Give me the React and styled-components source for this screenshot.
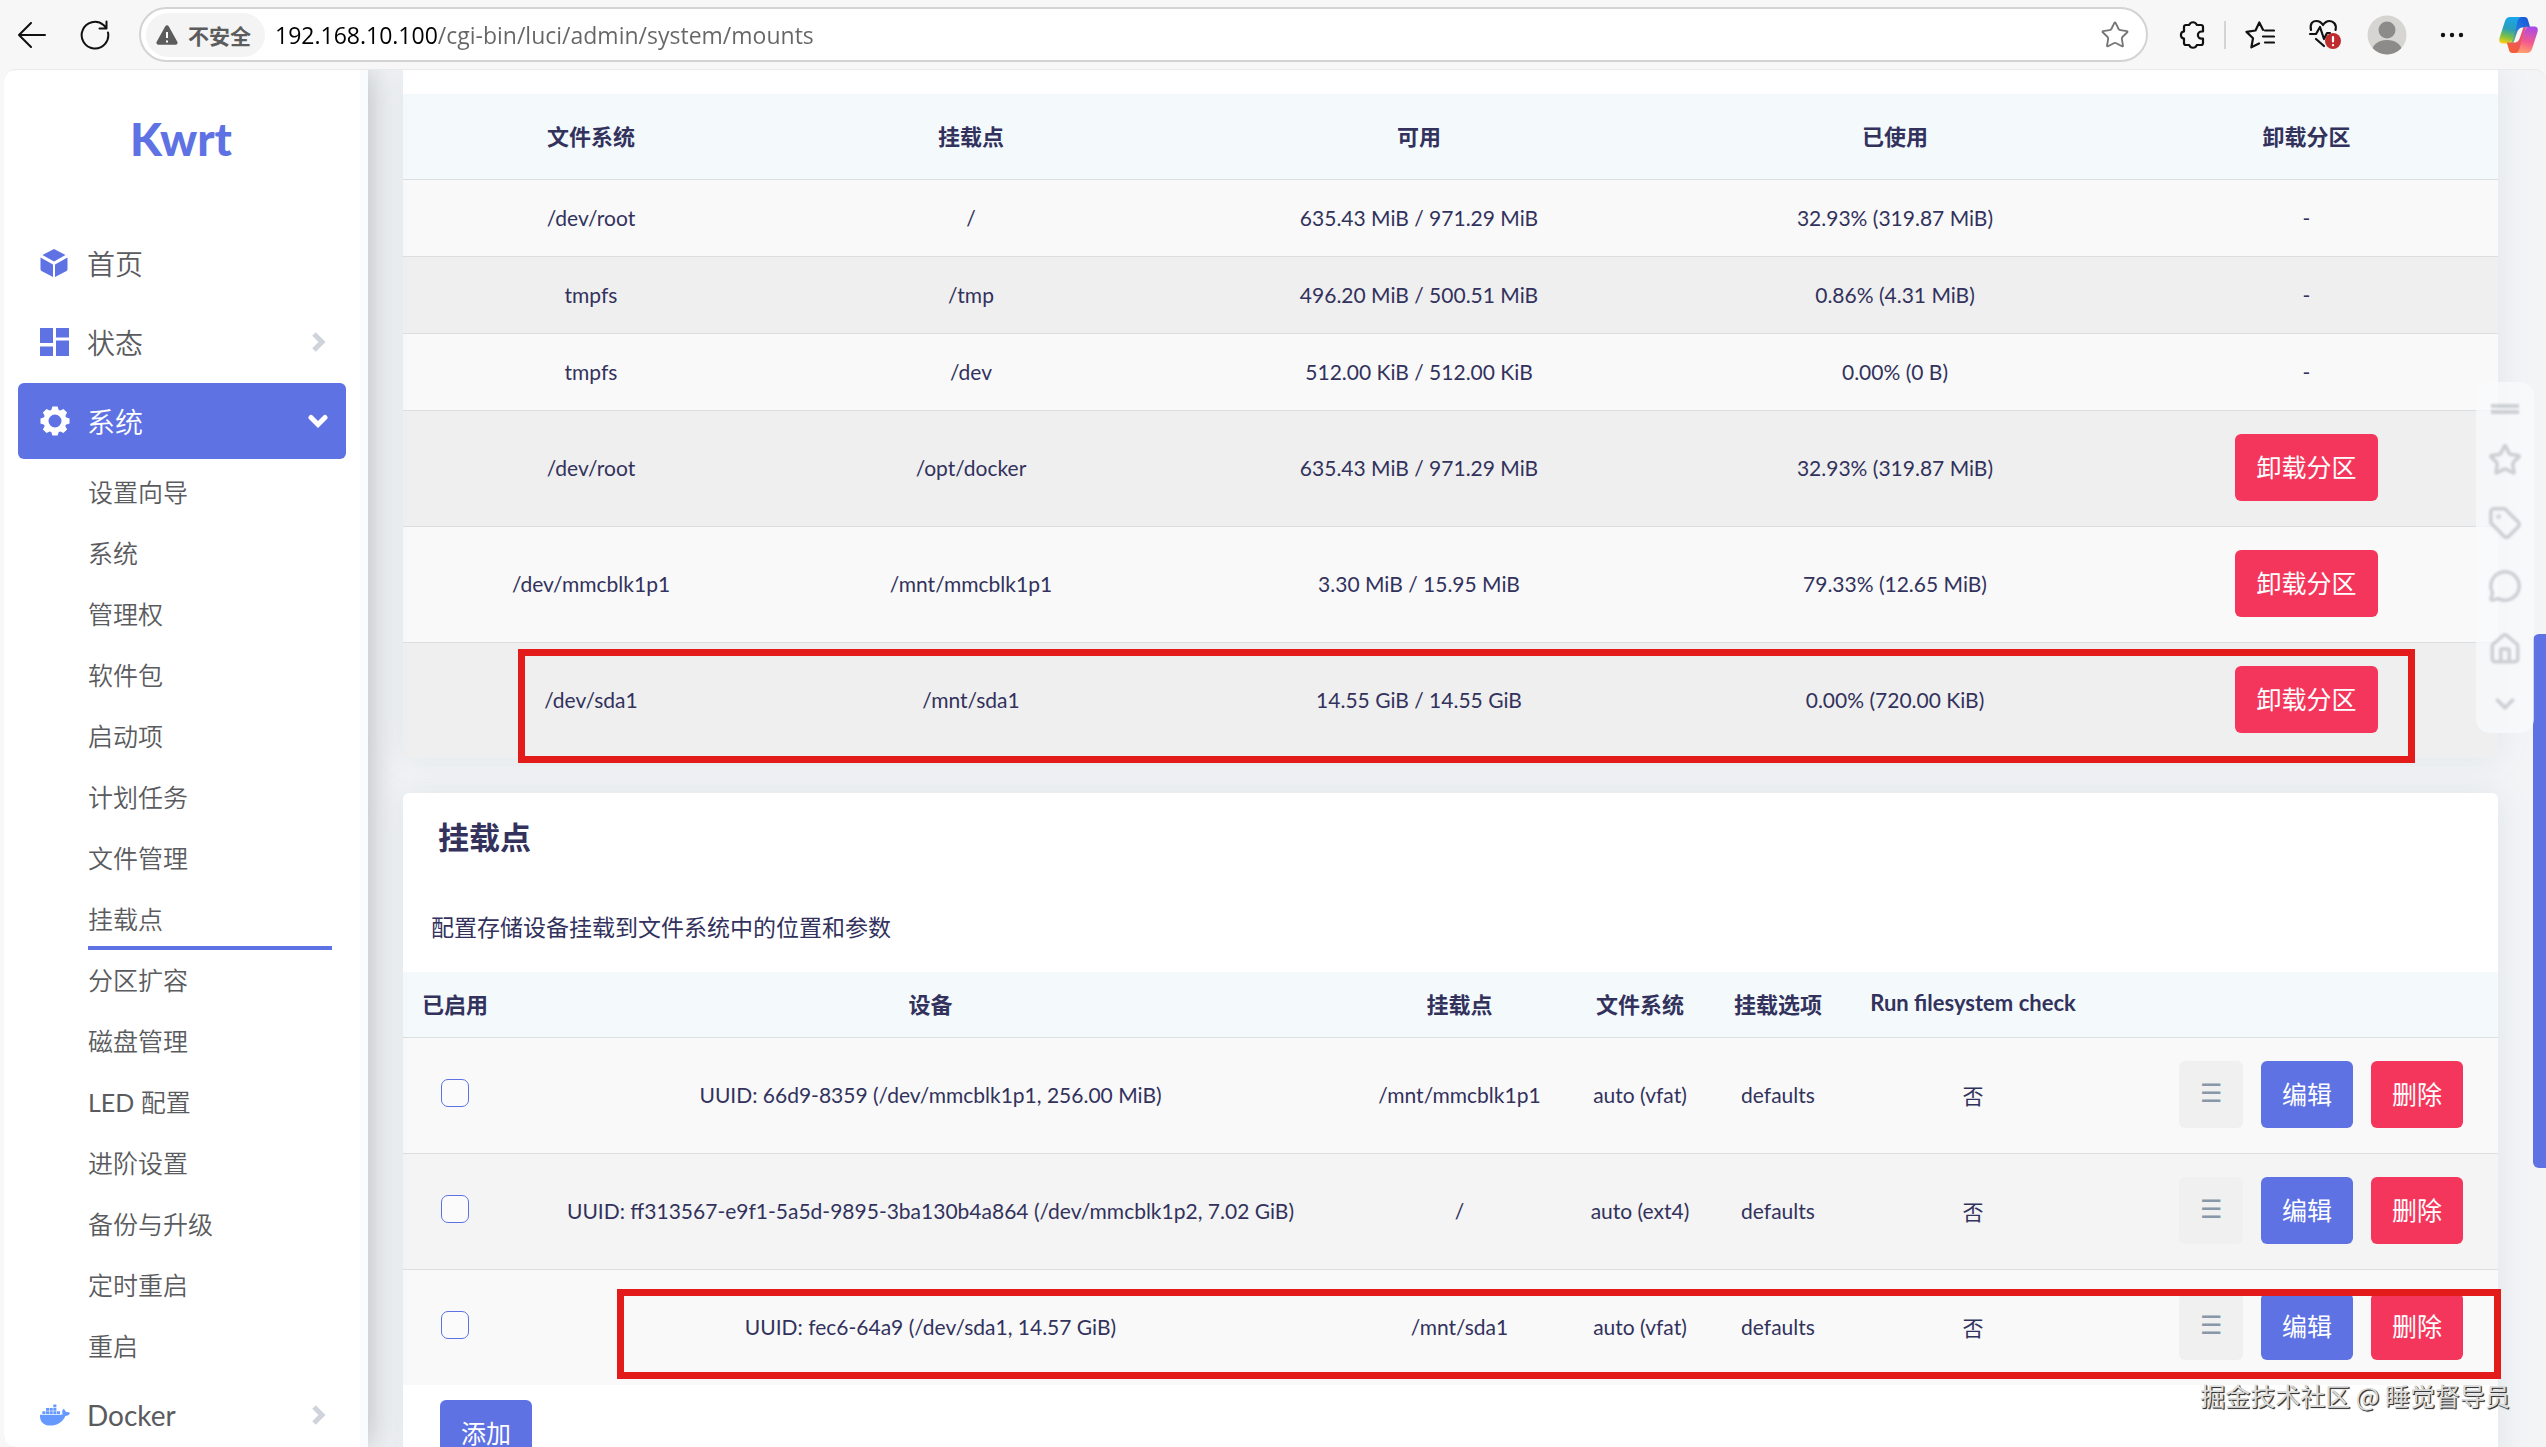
import React, { useState } from 'react';
import styled, { createGlobalStyle, css } from 'styled-components';
import { Star, Tag, MessageCircle, House, ChevronDown } from 'lucide-react';
import { FaDocker } from 'react-icons/fa';

const BLUE = '#5e72e4';
const RED = '#f5365c';
const INK = '#32325d';
const CJK = "'Noto Sans CJK SC', sans-serif";

const GlobalStyle = createGlobalStyle`
  * {
    box-sizing: border-box;
  }
  body {
    margin: 0;
    overflow: hidden;
    background: #f7f7f7;
    color: ${INK};
    font-family: 'Lato', ${CJK};
    font-size: 21px;
  }
  button,
  input {
    font-family: inherit;
  }
`;

const Window = styled.div`
  display: flex;
  flex-direction: column;
  height: 100vh;
`;

/* browser bar */

const BrowserBar = styled.header`
  display: flex;
  align-items: center;
  flex: 0 0 69px;
  padding-left: 13px;
  background: #f7f7f7;
`;

const IconButton = styled.button`
  display: flex;
  align-items: center;
  justify-content: center;
  flex: none;
  width: ${(p) => p.$width}px;
  height: 40px;
  padding: 0;
  border: 0;
  background: none;
  color: #111;
`;

const AddressBar = styled.div`
  display: flex;
  align-items: center;
  flex: 1;
  height: 55px;
  margin-right: 16px;
  padding: 0 16px 0 5px;
  border: 2px solid #d2d4d3;
  border-radius: 28px;
  background: #fff;
`;

const Security = styled.div`
  display: flex;
  align-items: center;
  gap: 10px;
  height: 44px;
  padding: 0 14px 0 10px;
  border-radius: 22px;
  background: #f4f4f4;
  color: #5c5c5c;
  font: bold 21px ${CJK};
`;

const Url = styled.input`
  flex: 1;
  margin-left: 10px;
  padding: 0;
  border: 0;
  outline: 0;
  color: #666;
  background: linear-gradient(90deg, #000 163px, #666 163px);
  background-clip: text;
  -webkit-text-fill-color: transparent;
  font-family: 'Open Sans', sans-serif;
  font-size: 23px;
`;

const Separator = styled.span`
  width: 2px;
  height: 28px;
  margin: 0 4px;
  background: #d4d4d4;
`;

const ArrowIcon = () => (
  <svg width="30" height="26" fill="none" stroke="currentColor" strokeWidth="2" strokeLinecap="round" strokeLinejoin="round">
    <path d="M28 13H2M14 1 2 13l12 12" />
  </svg>
);

const ReloadIcon = () => (
  <svg width="30" height="30" fill="none" stroke="currentColor" strokeWidth="2" strokeLinecap="round" strokeLinejoin="round">
    <path d="M28 12.500A13.300 13.300 0 1 1 23.500 5L26.500 8M26.500 1.500V8.500H19.500" />
  </svg>
);

const WarningIcon = () => (
  <svg width="22" height="20">
    <path d="M9.300 1.200a2 2 0 0 1 3.400 0l8.600 15.600a2 2 0 0 1-1.800 3H2.500a2 2 0 0 1-1.800-3z" fill="#5c5c5c" />
    <path d="M11 7v6M11 15.500v2" stroke="#fff" strokeWidth="2" />
  </svg>
);

const PuzzleIcon = () => (
  <svg width="26" height="30" fill="none" stroke="currentColor" strokeWidth="2.200" strokeLinejoin="round">
    <path d="M7 5h3.200a4 4 0 0 1 7.600 0H22a2 2 0 0 1 2 2v4.500h-1.500a3.600 3.600 0 0 0 0 7.200H24V23a2 2 0 0 1-2 2h-4.200a4 4 0 0 1-7.600 0H7a2 2 0 0 1-2-2v-4.300a3.700 3.700 0 0 1 0-7.300V7a2 2 0 0 1 2-2z" />
  </svg>
);

const FavoritesIcon = () => (
  <svg width="30" height="28" fill="none" stroke="currentColor" strokeWidth="2.200" strokeLinecap="round" strokeLinejoin="round">
    <path d="M18 8.800 14.300 1.500 10.500 9.500 1.500 10.900 8 17.200 6.400 26.300 14 22.500M20 9.500h9M18 15.500h11M20 21.500h9" />
  </svg>
);

const HealthIcon = () => (
  <svg width="34" height="32" fill="none" stroke="#111" strokeWidth="2.200" strokeLinecap="round" strokeLinejoin="round">
    <path d="M3 11C1.500 4 5 2 8.500 2c3 0 5 1.800 6.500 4 1.500-2.200 3.500-4 6.500-4C25 2 29 5 27.500 11M2 15h6l4-7 4 12 3-6h3M8 20l8 7" />
    <circle cx="25" cy="22" r="8" fill="#bf2c2f" stroke="none" />
    <path d="M25 18v4.500M25 26v.200" stroke="#fff" />
  </svg>
);

const AvatarIcon = () => (
  <svg width="40" height="40">
    <clipPath id="avatar">
      <circle cx="20" cy="20" r="19.500" />
    </clipPath>
    <g clipPath="url(#avatar)">
      <rect width="40" height="40" fill="#d6d5d2" />
      <circle cx="20" cy="15" r="8.500" fill="#8c8b89" />
      <ellipse cx="20" cy="36" rx="15" ry="11" fill="#8c8b89" />
    </g>
  </svg>
);

const DotsIcon = () => (
  <svg width="24" height="6" fill="#111">
    <circle cx="3" cy="3" r="2.200" />
    <circle cx="12" cy="3" r="2.200" />
    <circle cx="21" cy="3" r="2.200" />
  </svg>
);

const RIBBON =
  'M11 0h12c-3 0-4 2.500-5 6l-3 11c-1.500 6-3 9.500-7 9.500H3.500C.5 26.500-.3 24 .5 21L6 4C7 1.500 8.500 0 11 0z';
const FOLD =
  'M22 0h3.500c2 0 3 1 3.500 3l2.200 7.500H24c-3.500 0-5 2-6 5l-3 9c-.6 1.500-2 2-5 2 2 0 2.800-3 3.500-5.500L17.500 6C18.500 2.500 19 0 22 0z';

const CopilotIcon = () => (
  <svg width="39" height="36">
    <defs>
      <linearGradient id="cool" x1="0.500" y1="0" x2="0.300" y2="1">
        <stop offset="0" stopColor="#1aa5ea" />
        <stop offset="0.450" stopColor="#2a9fb8" />
        <stop offset="0.750" stopColor="#7cc142" />
        <stop offset="1" stopColor="#f8cf17" />
      </linearGradient>
      <linearGradient id="navy" x1="1" y1="0" x2="0" y2="1">
        <stop offset="0" stopColor="#1a50d6" />
        <stop offset="0.500" stopColor="#1e78e2" />
        <stop offset="1" stopColor="#9ac93b" />
      </linearGradient>
      <linearGradient id="warm" x1="0.500" y1="0" x2="0.300" y2="1">
        <stop offset="0" stopColor="#ff9d6c" />
        <stop offset="0.400" stopColor="#f4598e" />
        <stop offset="1" stopColor="#a64be8" />
      </linearGradient>
      <linearGradient id="rust" x1="1" y1="0" x2="0" y2="1">
        <stop offset="0" stopColor="#f4622a" />
        <stop offset="1" stopColor="#e5498f" />
      </linearGradient>
    </defs>
    <path d={FOLD} fill="url(#navy)" />
    <path d={RIBBON} fill="url(#cool)" />
    <g transform="rotate(180 19.500 18)">
      <path d={FOLD} fill="url(#rust)" />
      <path d={RIBBON} fill="url(#warm)" />
    </g>
  </svg>
);

/* sidebar */

const Page = styled.div`
  position: relative;
  display: flex;
  flex: 1;
  min-height: 0;
  margin-left: 4px;
  overflow: hidden;
  border-top: 1px solid #e9e9e9;
  border-radius: 12px 12px 0 12px;
  background: #f2f4f6;
`;

const Sidebar = styled.nav`
  z-index: 1;
  flex: 0 0 364px;
  padding: 0 14px;
  border-right: 8px solid #fafbfd;
  background: #fff;
  box-shadow: 0 0 32px rgba(50, 60, 70, 0.35);
  font-family: 'Lato', 'Noto Sans CJK SC DemiLight', ${CJK};
`;

const Logo = styled.a`
  display: block;
  padding: 37px 8px 54px 6px;
  color: ${BLUE};
  font: 900 46px/64px 'Lato', sans-serif;
  text-align: center;
  text-decoration: none;
`;

const MenuItem = styled.a`
  display: flex;
  align-items: center;
  height: 76px;
  margin-bottom: 3px;
  padding: 0 18px 0 22px;
  border-radius: 6px;
  color: ${(p) => (p.$active ? '#fff' : '#5a5b5e')};
  background: ${(p) => (p.$active ? BLUE : 'none')};
  font-size: 28px;
  text-decoration: none;

  svg:first-child {
    flex: 0 0 30px;
    margin-right: 17px;
    color: ${(p) => p.$tint || BLUE};
  }
  span {
    flex: 1;
  }
`;

const SubMenu = styled.div`
  padding: 0 14px 0 70px;
`;

const SubItem = styled.a`
  display: block;
  height: 61px;
  border-bottom: 4px solid ${(p) => (p.$active ? BLUE : 'transparent')};
  color: #5a5b5e;
  font-size: 25px;
  line-height: 60px;
  text-decoration: none;
`;

const CubeIcon = () => (
  <svg width="28" height="30" fill="currentColor">
    <path d="M14 1 25.500 7 14 13.500 2.500 7zM.5 9.500 13 16.500V29L1.500 23Q.5 22.500.5 21zM27.500 9.500 15 16.500V29l11.500-6q1-.5 1-2z" />
  </svg>
);

const DashboardIcon = () => (
  <svg width="28" height="28" fill="currentColor">
    <path d="M0 0h13v15H0zM0 18.500h13V28H0zM16 0h13v9.500H16zM16 12.500h13V28H16z" />
  </svg>
);

const GearIcon = () => (
  <svg width="30" height="30" viewBox="-15 -15 30 30">
    <circle r="9" fill="none" stroke="currentColor" strokeWidth="5" />
    {[0, 45, 90, 135].map((a) => (
      <path
        key={a}
        transform={`rotate(${a})`}
        d="M-4-10-2.600-14.500H2.600L4-10ZM-4 10-2.600 14.500H2.600L4 10Z"
        fill="currentColor"
      />
    ))}
  </svg>
);

const Chevron = ({ down }) => (
  <svg
    width="20"
    height="20"
    fill="none"
    stroke={down ? '#fff' : '#ced4da'}
    strokeWidth="5"
    strokeLinecap={down ? 'round' : 'butt'}
  >
    <path d={down ? 'M3 6.500 10 13.500 17 6.500' : 'M6 2 14 10 6 18'} />
  </svg>
);

/* content */

const Main = styled.main`
  flex: 1;
  padding: 0 48px 0 35px;
`;

const Card = styled.section`
  position: relative;
  margin-bottom: 35px;
  padding-top: ${(p) => (p.$cut ? 24 : 0)}px;
  border-radius: ${(p) => (p.$cut ? '0 0 6px 6px' : '6px 6px 0 0')};
  background: #fff;
  box-shadow: 0 0 32px rgba(136, 152, 170, 0.15);
`;

const Title = styled.h3`
  margin: 0;
  padding: 22px 35px;
  font-size: 31px;
  line-height: 44px;
`;

const Description = styled.p`
  margin: 0;
  padding: 30px 28px 29px;
  font-size: 23px;
  line-height: 32px;
`;

const Table = styled.table`
  width: 100%;
  table-layout: fixed;
  border-spacing: 0;
  text-align: center;

  th {
    height: ${(p) => p.$headHeight}px;
    padding: 0 0 4px;
    background: #f4f9fc;
    font-size: 22px;
  }
  td {
    height: 77px;
    padding: 0 0 2px;
    border-top: 1px solid #dcdfe1;
    background: #f9f9f9;
  }
  tbody tr:nth-child(even) td {
    background: ${(p) => p.$stripe};
  }
`;

const Row = styled.tr`
  ${(p) =>
    p.$tall &&
    css`
      && td {
        height: 116px;
      }
    `}
`;

const Button = styled.button`
  height: 67px;
  padding: 0 21px 4px;
  border: 0;
  border-radius: 6px;
  color: #fff;
  background: ${(p) => p.$color || BLUE};
  font-size: 25px;
`;

const DragButton = styled(Button)`
  width: 64px;
  padding: 0 0 4px;
  color: #8898aa;
  background: #f0f0f0;
`;

const Actions = styled.div`
  display: flex;
  justify-content: flex-end;
  gap: 18px;
  padding-right: 35px;
`;

const Checkbox = styled.input`
  appearance: none;
  display: block;
  width: 28px;
  height: 28px;
  margin: 0 auto 4px;
  border: 1px solid ${BLUE};
  border-radius: 7px;
  background: ${(p) => (p.checked ? BLUE : '#fbfbfc')};
`;

const Footer = styled.div`
  padding: 15px 37px 60px;
`;

/* red frame drawn over the table */
const Highlight = styled.div`
  position: absolute;
  left: ${(p) => p.$left}px;
  right: ${(p) => p.$right}px;
  bottom: ${(p) => p.$bottom}px;
  height: ${(p) => p.$height}px;
  border: 7px solid #e41b1b;
  pointer-events: none;
`;

const FloatingBar = styled.aside`
  position: absolute;
  top: 312px;
  right: 12px;
  z-index: 2;
  display: flex;
  flex-direction: column;
  align-items: center;
  gap: 29px;
  width: 58px;
  padding: 22px 0 14px;
  border-radius: 14px;
  color: #8f949b;
  background: rgba(250, 251, 252, 0.7);

  svg {
    opacity: 0.4;
    filter: blur(1px);
  }
  svg:last-child {
    margin-top: -6px;
  }
`;

const ScrollThumb = styled.div`
  position: absolute;
  top: 564px;
  right: 0;
  width: 13px;
  height: 534px;
  border-radius: 6px 0 0 6px;
  background: ${BLUE};
`;

const Watermark = styled.div`
  position: absolute;
  right: 36px;
  bottom: 34px;
  z-index: 3;
  color: #dcdcdc;
  font: 25px/36px ${CJK};
  text-shadow: 1px 1px 1px #333, 1px 1px 0 #555;
`;

const SUB_MENU = [
  '设置向导',
  '系统',
  '管理权',
  '软件包',
  '启动项',
  '计划任务',
  '文件管理',
  '挂载点',
  '分区扩容',
  '磁盘管理',
  'LED 配置',
  '进阶设置',
  '备份与升级',
  '定时重启',
  '重启',
];

const MOUNTED = [
  ['/dev/root', '/', '635.43 MiB / 971.29 MiB', '32.93% (319.87 MiB)', false],
  ['tmpfs', '/tmp', '496.20 MiB / 500.51 MiB', '0.86% (4.31 MiB)', false],
  ['tmpfs', '/dev', '512.00 KiB / 512.00 KiB', '0.00% (0 B)', false],
  ['/dev/root', '/opt/docker', '635.43 MiB / 971.29 MiB', '32.93% (319.87 MiB)', true],
  ['/dev/mmcblk1p1', '/mnt/mmcblk1p1', '3.30 MiB / 15.95 MiB', '79.33% (12.65 MiB)', true],
  ['/dev/sda1', '/mnt/sda1', '14.55 GiB / 14.55 GiB', '0.00% (720.00 KiB)', true],
];

const MOUNT_POINTS = [
  ['UUID: 66d9-8359 (/dev/mmcblk1p1, 256.00 MiB)', '/mnt/mmcblk1p1', 'auto (vfat)'],
  ['UUID: ff313567-e9f1-5a5d-9895-3ba130b4a864 (/dev/mmcblk1p2, 7.02 GiB)', '/', 'auto (ext4)'],
  ['UUID: fec6-64a9 (/dev/sda1, 14.57 GiB)', '/mnt/sda1', 'auto (vfat)'],
];

const Columns = ({ widths }) => (
  <colgroup>
    {widths.map((w, i) => (
      <col key={i} width={w} />
    ))}
  </colgroup>
);

const Browser = () => (
  <BrowserBar>
    <IconButton $width={38} aria-label="Back">
      <ArrowIcon />
    </IconButton>
    <IconButton $width={88} aria-label="Reload">
      <ReloadIcon />
    </IconButton>
    <AddressBar>
      <Security>
        <WarningIcon />
        不安全
      </Security>
      <Url
        type="text"
        aria-label="Address"
        defaultValue="192.168.10.100/cgi-bin/luci/admin/system/mounts"
      />
      <IconButton $width={30} aria-label="Add to favorites">
        <Star size={30} strokeWidth={1.5} color="#767676" />
      </IconButton>
    </AddressBar>
    <IconButton $width={56} aria-label="Extensions">
      <PuzzleIcon />
    </IconButton>
    <Separator />
    <IconButton $width={60} aria-label="Favorites">
      <FavoritesIcon />
    </IconButton>
    <IconButton $width={70} aria-label="Browser essentials">
      <HealthIcon />
    </IconButton>
    <IconButton $width={54} aria-label="Profile">
      <AvatarIcon />
    </IconButton>
    <IconButton $width={76} aria-label="More">
      <DotsIcon />
    </IconButton>
    <IconButton $width={56} aria-label="Copilot">
      <CopilotIcon />
    </IconButton>
  </BrowserBar>
);

const Menu = () => (
  <Sidebar>
    <Logo href="#">Kwrt</Logo>
    <MenuItem href="#">
      <CubeIcon />
      <span>首页</span>
    </MenuItem>
    <MenuItem href="#">
      <DashboardIcon />
      <span>状态</span>
      <Chevron />
    </MenuItem>
    <MenuItem href="#" $active $tint="#fff">
      <GearIcon />
      <span>系统</span>
      <Chevron down />
    </MenuItem>
    <SubMenu>
      {SUB_MENU.map((name) => (
        <SubItem key={name} href="#" $active={name === '挂载点'}>
          {name}
        </SubItem>
      ))}
    </SubMenu>
    <MenuItem href="#" $tint="#6699ff">
      <FaDocker size={30} />
      <span>Docker</span>
      <Chevron />
    </MenuItem>
  </Sidebar>
);

const MountedCard = () => (
  <Card $cut>
    <Table $headHeight={85} $stripe="#efefef">
      <Columns widths={[376, 384, 512, 440, 383]} />
      <thead>
        <tr>
          <th>文件系统</th>
          <th>挂载点</th>
          <th>可用</th>
          <th>已使用</th>
          <th>卸载分区</th>
        </tr>
      </thead>
      <tbody>
        {MOUNTED.map(([fs, point, free, used, removable]) => (
          <Row key={point} $tall={removable}>
            <td>{fs}</td>
            <td>{point}</td>
            <td>{free}</td>
            <td>{used}</td>
            <td>{removable ? <Button $color={RED}>卸载分区</Button> : '-'}</td>
          </Row>
        ))}
      </tbody>
    </Table>
    <Highlight $left={115} $right={83} $bottom={-5} $height={114} />
  </Card>
);

const MountPointsCard = () => {
  const [enabled, setEnabled] = useState([false, false, false]);
  const toggle = (i) => setEnabled(enabled.map((v, j) => (i === j ? !v : v)));

  return (
    <Card>
      <Title>挂载点</Title>
      <Description>配置存储设备挂载到文件系统中的位置和参数</Description>
      <Table $headHeight={65} $stripe="#f4f4f4">
        <Columns widths={[104, 847, 211, 150, 126, 264, 393]} />
        <thead>
          <tr>
            <th>已启用</th>
            <th>设备</th>
            <th>挂载点</th>
            <th>文件系统</th>
            <th>挂载选项</th>
            <th>Run filesystem check</th>
            <th />
          </tr>
        </thead>
        <tbody>
          {MOUNT_POINTS.map(([device, point, type], i) => (
            <Row key={device} $tall>
              <td>
                <Checkbox
                  type="checkbox"
                  aria-label={point}
                  checked={enabled[i]}
                  onChange={() => toggle(i)}
                />
              </td>
              <td>{device}</td>
              <td>{point}</td>
              <td>{type}</td>
              <td>defaults</td>
              <td>否</td>
              <td>
                <Actions>
                  <DragButton>☰</DragButton>
                  <Button>编辑</Button>
                  <Button $color={RED}>删除</Button>
                </Actions>
              </td>
            </Row>
          ))}
        </tbody>
      </Table>
      <Footer>
        <Button>添加</Button>
      </Footer>
      <Highlight $left={214} $right={-3} $bottom={148} $height={90} />
    </Card>
  );
};

const App = () => (
  <Window>
    <GlobalStyle />
    <Browser />
    <Page>
      <Menu />
      <Main>
        <MountedCard />
        <MountPointsCard />
      </Main>
      <ScrollThumb />
      <FloatingBar>
        <svg width="30" height="10">
          <path d="M1 2h28M1 8h28" stroke="currentColor" strokeWidth="4" />
        </svg>
        <Star size={34} strokeWidth={2.5} />
        <Tag size={34} strokeWidth={2.5} />
        <MessageCircle size={34} strokeWidth={2.5} />
        <House size={34} strokeWidth={2.5} />
        <ChevronDown size={30} strokeWidth={3} />
      </FloatingBar>
      <Watermark>掘金技术社区 @ 睡觉督导员</Watermark>
    </Page>
  </Window>
);

export default App;
